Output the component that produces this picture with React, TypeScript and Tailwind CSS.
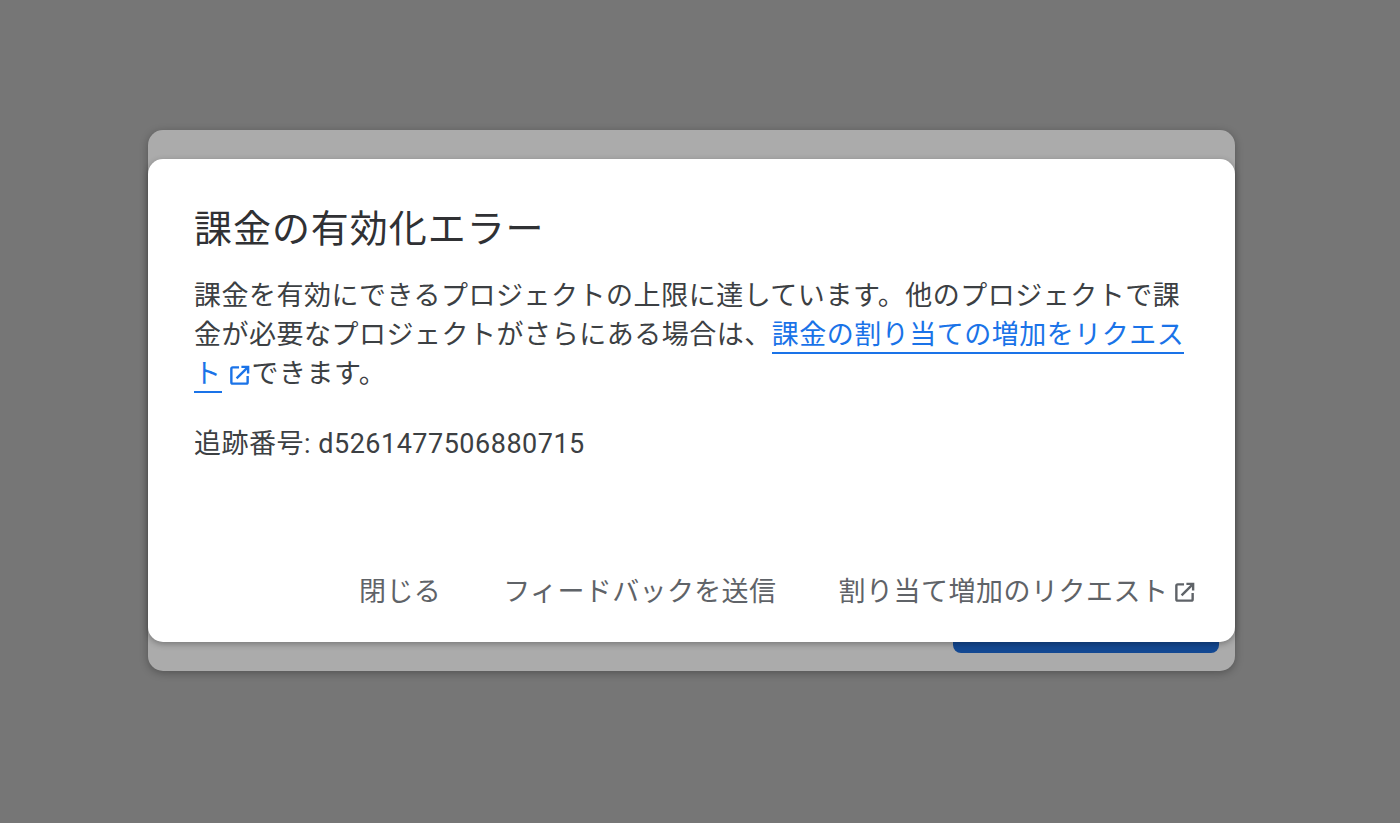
import React from "react";

function ExternalIcon({ className }: { className: string }) {
  return (
    <svg viewBox="0 0 24 24" className={className} fill="none" stroke="currentColor" strokeWidth="2.5" aria-hidden="true">
      <path d="M11.5 3.5H5A1.5 1.5 0 0 0 3.5 5v14A1.5 1.5 0 0 0 5 20.500h14a1.500 1.500 0 0 0 1.500-1.500v-6.500" />
      <path d="M14 3h7v7" strokeWidth="2.500" />
      <path d="M20.500 3.500 9 15" />
    </svg>
  );
}

export default function App() {
  return (
    <div className="h-[823px] w-[1400px] bg-[#767676] flex items-center justify-center font-['Roboto','Noto_Sans_CJK_JP',sans-serif] overflow-hidden">
      <div className="relative mt-[-22px] ml-[-18px] w-[1087px] h-[541px] rounded-[15px] bg-[#ababab] shadow-[0_2px_8px_rgba(0,0,0,0.3)] flex items-end justify-end px-4 pb-[18px]">
        <div className="w-[266px] h-[40px] rounded-[8px] bg-[#134892]" />
        <div className="absolute left-0 right-0 top-[29px] h-[483px] rounded-[15px] bg-white shadow-[0_2px_6px_rgba(0,0,0,0.3)] flex flex-col pl-[46.5px] pr-[39px]">
          <h1 className="mt-[46px] text-[38px] leading-[48px] tracking-[0.95px] text-[#303134] font-normal whitespace-nowrap">
            課金の有効化エラー
          </h1>
          <p className="mt-[24px] text-[27px] leading-[39px] tracking-[0.51px] text-[#3c4043]">
            課金を有効にできるプロジェクトの上限に達しています。他のプロジェクトで課金が必要なプロジェクトがさらにある場合は、
            <a className="text-[#1a73e8]">
              <span className="border-b-2 border-[#1a73e8] pb-[1px]">課金の割り当ての増加をリクエスト</span>
              <ExternalIcon className="inline-block w-[23px] h-[23px] ml-[6px] mr-[1px] align-[-4px]" />
            </a>
            できます。
          </p>
          <p className="mt-[31px] text-[27px] leading-[39px] tracking-[0.5px] text-[#3c4043] whitespace-nowrap">
            追跡番号: d5261477506880715
          </p>
          <div className="mt-auto mb-[30px] flex items-center justify-end gap-[62px] text-[27px] leading-[40px] tracking-[0.37px] text-[#5f6368] whitespace-nowrap">
            <span>閉じる</span>
            <span>フィードバックを送信</span>
            <span className="flex items-center gap-[4px] tracking-[0.51px]">
              割り当て増加のリクエスト
              <ExternalIcon className="w-[23px] h-[23px]" />
            </span>
          </div>
        </div>
      </div>
    </div>
  );
}
